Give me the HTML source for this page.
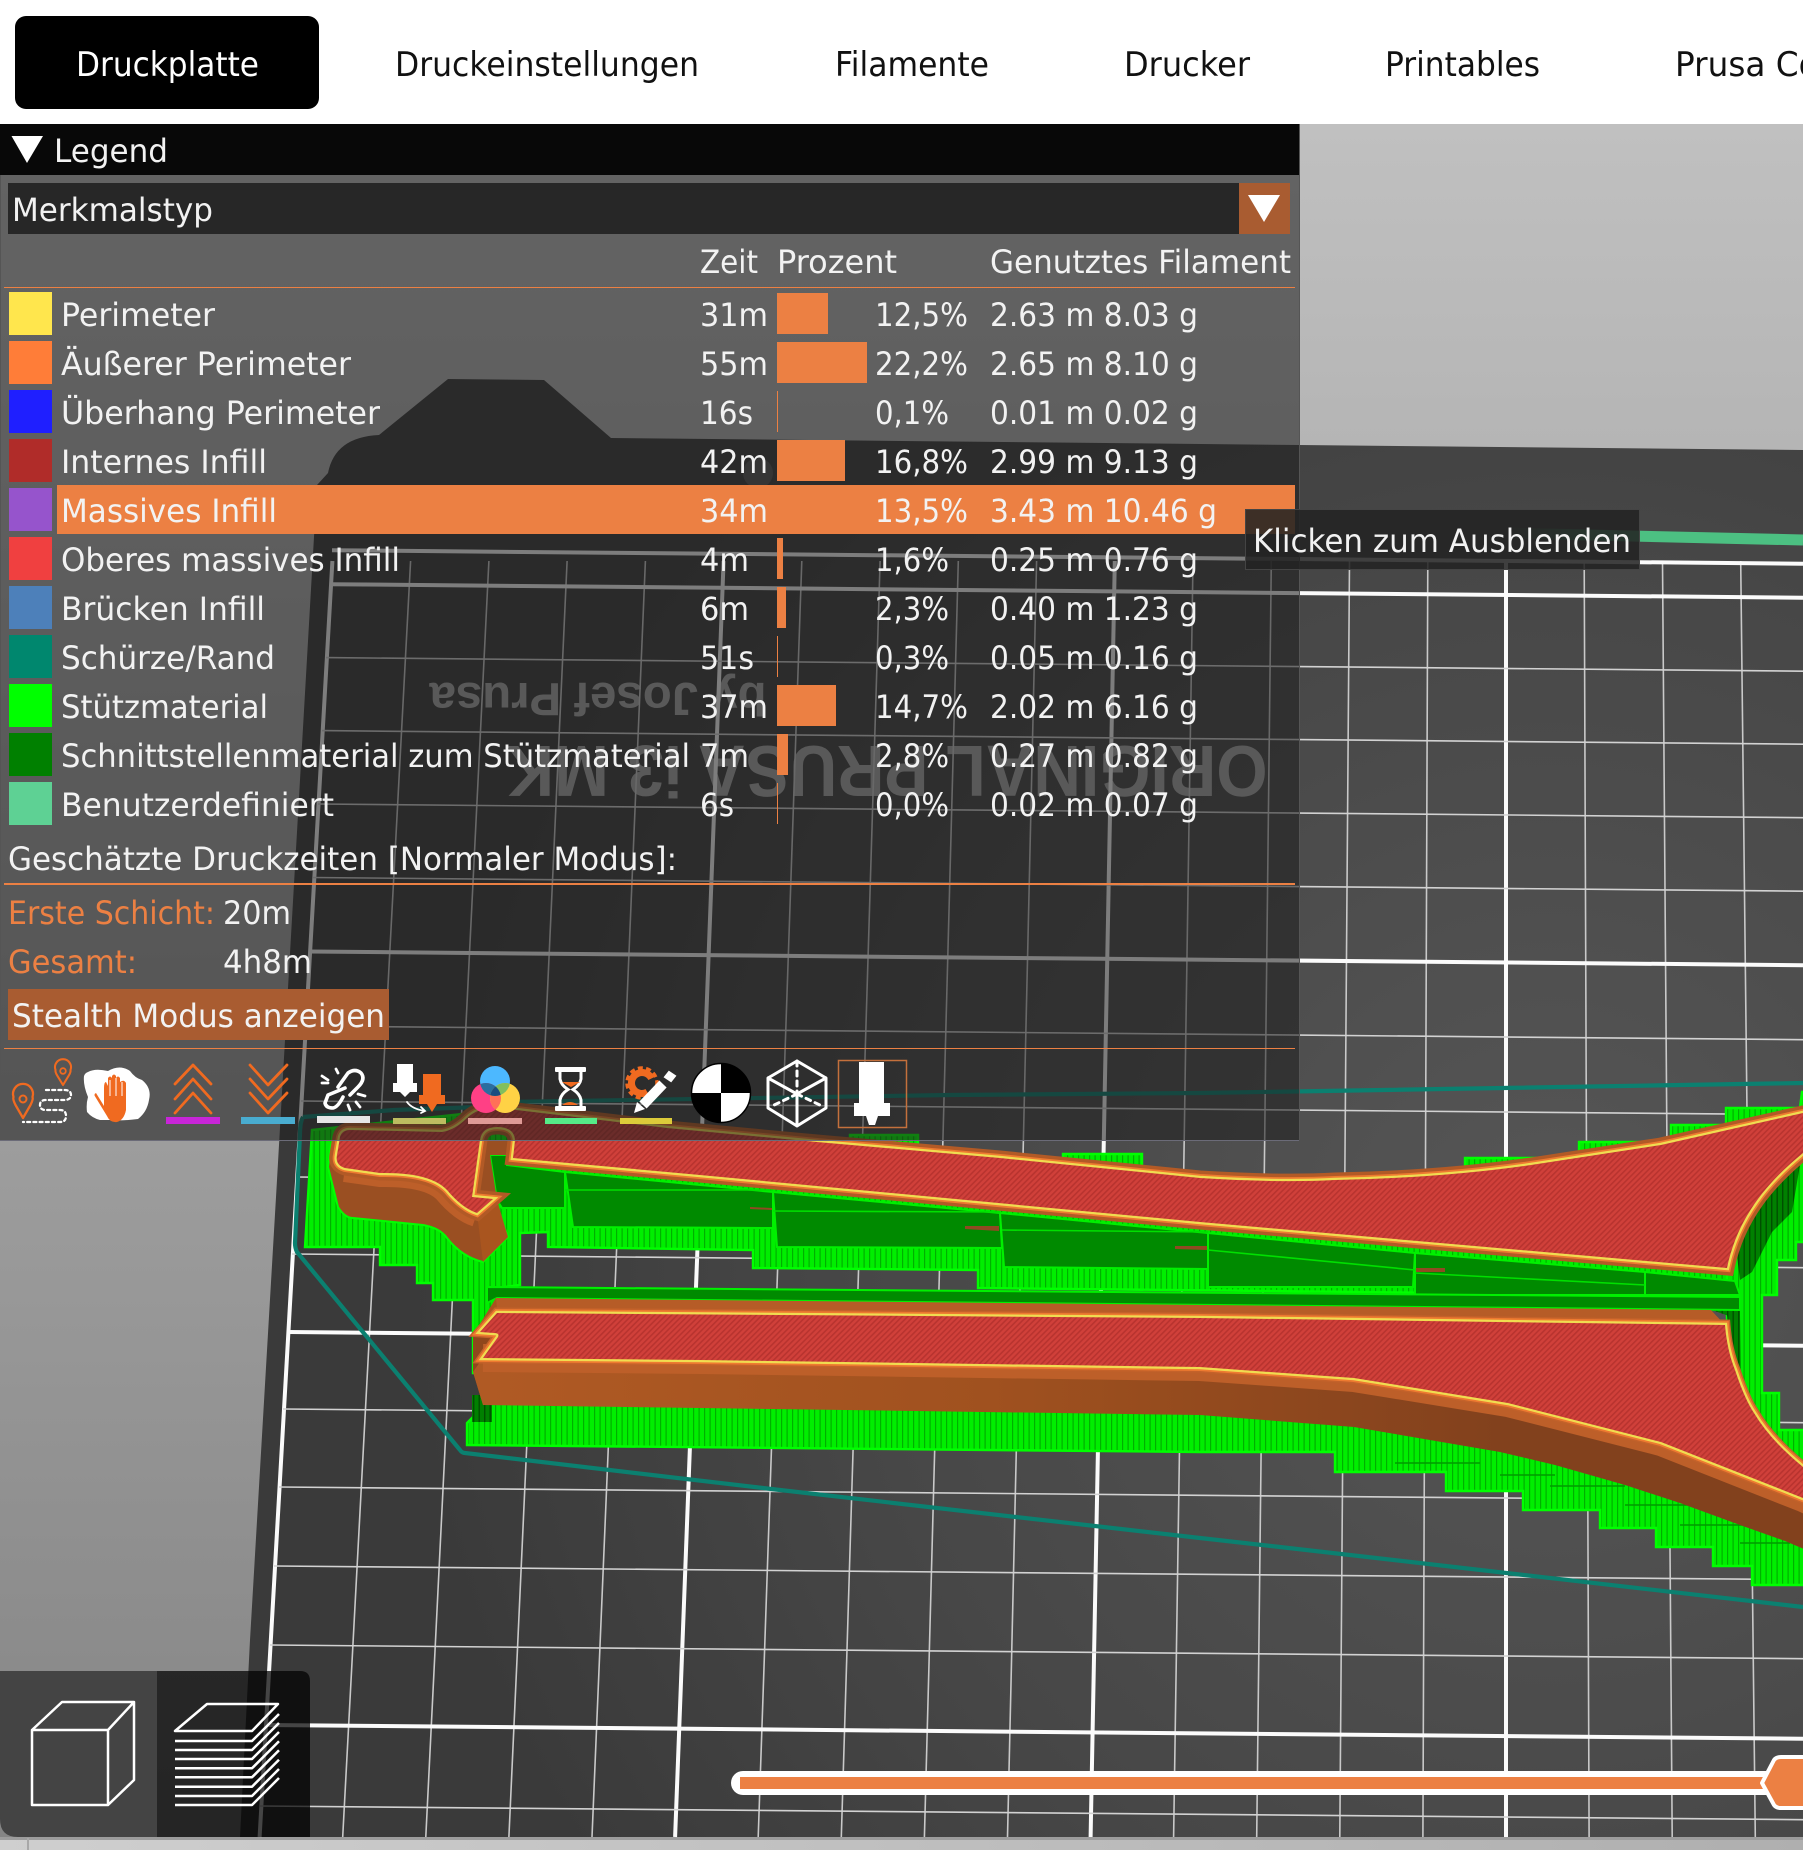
<!DOCTYPE html>
<html lang="de"><head><meta charset="utf-8"><title>Legend</title>
<style>
html,body{margin:0;padding:0;background:#fff}
svg{display:block}
text{font-family:"DejaVu Sans",sans-serif;font-size:32px;fill:#f2f2f2}
.o{fill:#ec8043}
.tab{font-size:34px;fill:#111}
</style></head><body>
<svg xmlns="http://www.w3.org/2000/svg" width="1803" height="1850" viewBox="0 0 1803 1850">
<defs>
<linearGradient id="bg" x1="0" y1="124" x2="0" y2="1840" gradientUnits="userSpaceOnUse"><stop offset="0" stop-color="#c0c0c0"/><stop offset="1" stop-color="#858585"/></linearGradient>
<linearGradient id="strip" x1="0" y1="0" x2="1803" y2="0" gradientUnits="userSpaceOnUse"><stop offset="0" stop-color="#cfcfcf"/><stop offset="1" stop-color="#afafaf"/></linearGradient>
<radialGradient id="plate" cx="1550" cy="1250" r="1150" gradientUnits="userSpaceOnUse"><stop offset="0" stop-color="#565656"/><stop offset=".6" stop-color="#474747"/><stop offset="1" stop-color="#3a3a3a"/></radialGradient>
<linearGradient id="purge" x1="1504" y1="0" x2="1600" y2="0" gradientUnits="userSpaceOnUse"><stop offset="0" stop-color="#4cc082" stop-opacity="0"/><stop offset="1" stop-color="#4cc082"/></linearGradient>
<linearGradient id="wall" x1="480" y1="0" x2="1500" y2="0" gradientUnits="userSpaceOnUse"><stop offset="0" stop-color="#b05a24"/><stop offset=".5" stop-color="#a0511f"/><stop offset="1" stop-color="#82411d"/></linearGradient>
<pattern id="red" width="4" height="4" patternUnits="userSpaceOnUse" patternTransform="rotate(45)"><rect width="4" height="4" fill="#d0403a"/><rect width="1.6" height="4" fill="#b8332f"/></pattern>
<pattern id="grn" width="5.5" height="10" patternUnits="userSpaceOnUse"><rect width="5.5" height="10" fill="#00ee00"/><rect width="1.2" height="10" fill="#00b000"/></pattern>
<pattern id="dgrn" width="5.5" height="10" patternUnits="userSpaceOnUse"><rect width="5.5" height="10" fill="#008000"/><rect width="1.4" height="10" fill="#004f00"/></pattern>
<path id="up" d="M350 1130L442 1132Q455 1130 467 1118Q480 1106 500 1108L667 1128L817 1142L1000 1158L1200 1178Q1280 1183 1335 1180Q1440 1178 1531 1165L1661 1145L1803 1113L1830 1107L1830 1135L1803 1153C1770 1180 1738 1215 1727 1268L1200 1222L700 1175L513 1158Q514 1150 515 1140Q514 1127 497 1127Q482 1127 480 1140L472 1197L493 1199L477 1213Q462 1208 447 1190Q430 1172 380 1173L345 1168Q335 1165 337 1155L340 1137Q342 1130 350 1130Z"/>
<path id="lo" d="M497 1313L1200 1318L1725 1325Q1727 1350 1735 1370Q1745 1400 1754 1413Q1770 1440 1803 1467L1830 1490L1830 1510L1803 1498L1661 1442L1508 1403L1354 1378L1200 1367L700 1360L483 1358L498 1337Q500 1333 494 1333L480 1332Z"/>
<clipPath id="cb"><circle cx="495" cy="1081" r="15"/></clipPath>
<clipPath id="cp"><circle cx="486" cy="1098" r="15"/></clipPath>
<clipPath id="cy"><circle cx="505" cy="1098" r="15"/></clipPath>
</defs>

<!-- background -->
<rect width="1803" height="1850" fill="#fff"/>
<rect y="124" width="1803" height="1716" fill="url(#bg)"/>
<rect y="1840" width="1803" height="10" fill="url(#strip)"/>
<rect y="1837" width="1803" height="3" fill="#9c9c9c"/>
<rect x="27" y="1838" width="2" height="12" fill="#a8a8a8"/>

<!-- plate -->
<path d="M240 1837L250 1640L277 1180L285 1040L317 485L328 473Q335 437 379 435L448 379L544 380L611 438L1299 445L1803 450L1803 1837Z" fill="url(#plate)"/>
<circle cx="758" cy="473" r="15" fill="#555"/>
<text transform="rotate(180 887 746)" x="887" y="746" text-anchor="middle" textLength="761" lengthAdjust="spacingAndGlyphs" style="font-family:'Liberation Sans',sans-serif;font-weight:bold;font-size:72px;fill:#a8a8a8">ORIGINAL PRUSA i3 MK</text>
<text transform="rotate(180 598 683)" x="598" y="683" text-anchor="middle" textLength="337" lengthAdjust="spacingAndGlyphs" style="font-family:'Liberation Sans',sans-serif;font-weight:bold;font-size:46px;fill:#a8a8a8">by Josef Prusa</text>

<!-- grid -->
<path fill="none" stroke="#c9c9c9" stroke-width="1.6" d="M410.6 561L342.7 1837M488.9 561L425.8 1837M567.1 561L508.9 1837M645.4 561L592 1837M801.8 561L758.2 1837M880.1 561L841.3 1837M958.3 561L924.4 1837M1036.6 561L1007.5 1837M1193 561L1173.6 1837M1271.3 561L1256.7 1837M1349.5 561L1339.8 1837M1427.8 561L1422.9 1837M1584.2 561L1589.1 1837M1662.5 561L1672.2 1837M1740.7 561L1755.3 1837"/>
<path fill="none" stroke="#fbfbfb" stroke-width="4" d="M332.4 561L259.6 1837M723.6 561L675.1 1837M1114.8 561L1090.6 1837M1506 561L1506 1837"/>
<path fill="none" stroke="#d2d2d2" stroke-width="1.6" d="M326 657.6L1803 671.2M322 730.6L1803 744.2M318 804L1803 817.7M313 877.5L1803 891.2M305 1026L1803 1039.7M301 1101L1803 1114.7M296 1177L1803 1190.7M292 1254L1803 1267.7M283 1409L1803 1422.7M279 1487L1803 1500.7M274 1566L1803 1579.7M270 1645L1803 1658.7M260 1806L1803 1819.7"/>
<path fill="none" stroke="#fbfbfb" stroke-width="4" d="M332 550.2L1803 563.7M330 584.2L1803 597.7M309 951.5L1803 965.2M288 1332L1803 1345.7M265 1725L1803 1738.7"/>

<!-- purge line -->
<path d="M1504 533L1803 540" stroke="url(#purge)" stroke-width="11" fill="none"/>

<!-- skirt -->
<path d="M303 1117L394 1110L479 1107L503 1102L950 1095L1200 1093L1803 1083M303 1117Q300 1122 300 1133L295 1243Q295 1248 297 1252L460 1450Q462 1453 465 1453L780 1490L1200 1538L1280 1547L1803 1607" fill="none" stroke="#0b8070" stroke-width="4.2"/>

<!-- green supports -->
<g stroke="#00ff00" stroke-width="2.4" fill="url(#grn)">
<polygon points="312,1130 305,1247 380,1247 380,1265 417,1265 417,1283 433,1283 433,1300 473,1300 473,1373 497,1373 497,1288 520,1285 520,1233 548,1232 548,1247 753,1250 753,1268 978,1270 978,1288 1740,1296 1740,1260 1400,1200 500,1110"/>
<polygon points="467,1423 467,1445 1200,1452 1335,1452 1335,1472 1446,1472 1446,1491 1523,1491 1523,1510 1600,1510 1600,1528 1656,1528 1656,1547 1713,1547 1713,1566 1752,1566 1752,1585 1810,1585 1810,1500 1200,1400 490,1400"/>
<polygon points="1727,1277 1735,1235 1760,1195 1810,1145 1810,1242 1796,1242 1796,1260 1777,1260 1777,1295 1762,1295 1762,1393 1779,1393 1779,1430 1810,1430 1810,1480 1760,1420 1735,1370 1727,1330"/>
<polygon points="1465,1175 1465,1158 1579,1158 1579,1142 1671,1142 1671,1125 1726,1125 1726,1108 1800,1108 1802,1092 1810,1092 1810,1120"/>
<polygon points="1063,1154 1142,1154 1142,1168 1063,1162"/>
<polygon points="850,1135 918,1135 918,1148 850,1144"/>
</g>
<path d="M1500 1475L1555 1475M1550 1486H1625M1625 1505H1695M1680 1525H1745M1740 1543H1790M1395 1463H1480" stroke="#009a00" stroke-width="1.6" fill="none"/>
<polygon points="472,1395 492,1395 492,1422 472,1422" fill="url(#dgrn)"/>
<polygon points="1735,1240 1760,1200 1800,1165 1792,1212 1772,1232 1752,1272 1740,1280" fill="url(#dgrn)"/>
<polygon points="1727,1315 1740,1315 1741,1390 1762,1425 1762,1440 1745,1410 1733,1375" fill="url(#dgrn)"/>
<polygon points="1700,1298 1740,1296 1740,1320 1712,1310" fill="url(#dgrn)"/>

<!-- dark interface -->
<g fill="#008a00" stroke="#00f000" stroke-width="2">
<polygon points="490,1155 507,1155 507,1165 565,1172 565,1208 502,1208 497,1200"/>
<polygon points="565,1172 773,1192 773,1228 573,1227"/>
<polygon points="773,1192 1000,1213 1002,1248 777,1247"/>
<polygon points="1000,1213 1208,1233 1208,1269 1004,1267"/>
<polygon points="1208,1233 1415,1253 1413,1287 1208,1287"/>
<polygon points="1415,1253 1645,1272 1645,1295 1415,1295"/>
<polygon points="1645,1272 1735,1281 1740,1295 1645,1295"/>
<polygon points="487,1287 1740,1297 1740,1310 497,1298 487,1303"/>
</g>
<path d="M565 1190H773M773 1211L1000 1212M1002 1230L1208 1232M1208 1250L1415 1270M1415 1273L1645 1285" stroke="#00e000" stroke-width="1.6" fill="none"/>
<path d="M750 1207L772 1208L772 1210L750 1209ZM965 1226L999 1226L999 1231L965 1229ZM1175 1246L1207 1246L1207 1250L1175 1249ZM1416 1268L1445 1268L1445 1272L1416 1272Z" fill="#8f4a22"/>

<!-- lower bar -->
<polygon points="496,1298 1711,1310 1725,1325 497,1314" fill="#b65c27"/>
<polygon points="496,1298 473,1335 473,1372 483,1405 500,1370 498,1320" fill="#a8541f"/>
<polygon points="473,1335 498,1337 483,1358 473,1372" fill="#8f471c"/>
<path d="M473 1372L483 1405L700 1408L1200 1415L1354 1427L1500 1452L1555 1465L1625 1485L1680 1503L1740 1525L1785 1541L1830 1560L1830 1500L1661 1442L1508 1403L1354 1378L1200 1367L700 1360L483 1358Z" fill="url(#wall)"/>
<path d="M483 1358L700 1360L1200 1367L1354 1378L1508 1403L1661 1442L1803 1498L1830 1510" fill="none" stroke="#bd5f29" stroke-width="28"/>
<use href="#lo" fill="none" stroke="#c4622a" stroke-width="11"/>
<use href="#lo" fill="none" stroke="#ee7a30" stroke-width="8"/>
<use href="#lo" fill="none" stroke="#f0dc50" stroke-width="4.500"/>
<use href="#lo" fill="url(#red)"/>

<!-- upper bar -->
<path d="M333 1130L328 1167L338 1207Q345 1218 353 1218L423 1225Q440 1228 447 1238Q462 1257 483 1262L508 1237L495 1200L477 1213L447 1190L380 1173L340 1160Z" fill="#9a4f22" stroke="#00ff00" stroke-width="2"/>
<polygon points="480,1140 515,1140 507,1165 507,1155 490,1155 497,1200 472,1197" fill="#9a4f22"/>
<path d="M345 1168L380 1173Q430 1172 447 1190Q462 1208 477 1213" fill="none" stroke="#bd5f29" stroke-width="28"/>
<path d="M477 1213L497 1200L508 1237L483 1262Z" fill="#a9551f"/>
<use href="#up" fill="none" stroke="#b25a26" stroke-width="15"/>
<use href="#up" fill="none" stroke="#ee7a30" stroke-width="8"/>
<use href="#up" fill="none" stroke="#f0dc50" stroke-width="4.500"/>
<use href="#up" fill="url(#red)"/>

<!-- tabs -->
<rect width="1803" height="124" fill="#fff"/>
<rect x="15" y="16" width="304" height="93" rx="11" fill="#000"/>
<text class="tab" x="76" y="76" textLength="183" lengthAdjust="spacingAndGlyphs" style="fill:#fff">Druckplatte</text>
<text class="tab" x="395" y="76" textLength="304" lengthAdjust="spacingAndGlyphs">Druckeinstellungen</text>
<text class="tab" x="835" y="76" textLength="154" lengthAdjust="spacingAndGlyphs">Filamente</text>
<text class="tab" x="1124" y="76" textLength="126" lengthAdjust="spacingAndGlyphs">Drucker</text>
<text class="tab" x="1385" y="76" textLength="155" lengthAdjust="spacingAndGlyphs">Printables</text>
<text class="tab" x="1675" y="76" textLength="236" lengthAdjust="spacingAndGlyphs">Prusa Connect</text>

<!-- legend panel -->
<rect x="0" y="124" width="1299" height="1016" fill="rgb(30,30,30)" fill-opacity=".57"/>
<path d="M.5 124V1140M1299.5 124V1140" stroke="#555" fill="none"/>
<path d="M0 1140.5H1299" stroke="#6b6b78" fill="none"/>
<rect x="0" y="124" width="1299" height="51" fill="#080808"/>
<polygon points="11.5,136 43,136 27,163" fill="#fff"/>
<text x="54" y="162" textLength="114" lengthAdjust="spacingAndGlyphs">Legend</text>
<rect x="8" y="183" width="1282" height="51" fill="#272727"/>
<rect x="1239" y="183" width="51" height="51" fill="#a95c31"/>
<polygon points="1248,195 1280,195 1264,222" fill="#fff"/>
<text x="12" y="221" textLength="201" lengthAdjust="spacingAndGlyphs">Merkmalstyp</text>
<text x="700" y="273" textLength="58" lengthAdjust="spacingAndGlyphs">Zeit</text>
<text x="777" y="273" textLength="120" lengthAdjust="spacingAndGlyphs">Prozent</text>
<text x="990" y="273" textLength="301" lengthAdjust="spacingAndGlyphs">Genutztes Filament</text>
<rect x="4" y="287" width="1291" height="1" fill="#ec8043"/>

<!-- swatches -->
<rect x="9" y="292" width="43" height="43" fill="#ffe64d"/>
<rect x="9" y="341" width="43" height="43" fill="#ff7d38"/>
<rect x="9" y="390" width="43" height="43" fill="#1f1fff"/>
<rect x="9" y="439" width="43" height="43" fill="#b02c29"/>
<rect x="9" y="488" width="43" height="43" fill="#9654cc"/>
<rect x="9" y="537" width="43" height="43" fill="#f04040"/>
<rect x="9" y="586" width="43" height="43" fill="#4d80ba"/>
<rect x="9" y="635" width="43" height="43" fill="#00876e"/>
<rect x="9" y="684" width="43" height="43" fill="#00ff00"/>
<rect x="9" y="733" width="43" height="43" fill="#008000"/>
<rect x="9" y="782" width="43" height="43" fill="#5ed194"/>

<!-- highlight + bars -->
<rect x="57" y="485" width="1238" height="49" fill="#ec8043"/>
<g fill="#ec8043">
<rect x="777" y="293" width="51" height="41"/>
<rect x="777" y="342" width="90" height="41"/>
<rect x="777" y="391" width="1" height="41"/>
<rect x="777" y="440" width="68" height="41"/>
<rect x="777" y="538" width="6" height="41"/>
<rect x="777" y="587" width="9" height="41"/>
<rect x="777" y="636" width="1" height="41"/>
<rect x="777" y="685" width="59" height="41"/>
<rect x="777" y="734" width="11" height="41"/>
<rect x="777" y="783" width="1" height="41"/>
</g>

<!-- rows -->
<text x="61" y="326" textLength="154" lengthAdjust="spacingAndGlyphs">Perimeter</text>
<text x="700" y="326" textLength="68" lengthAdjust="spacingAndGlyphs">31m</text>
<text x="875" y="326" textLength="93" lengthAdjust="spacingAndGlyphs">12,5%</text>
<text x="990" y="326" textLength="208" lengthAdjust="spacingAndGlyphs">2.63 m 8.03 g</text>

<text x="61" y="375" textLength="290" lengthAdjust="spacingAndGlyphs">Äußerer Perimeter</text>
<text x="700" y="375" textLength="68" lengthAdjust="spacingAndGlyphs">55m</text>
<text x="875" y="375" textLength="93" lengthAdjust="spacingAndGlyphs">22,2%</text>
<text x="990" y="375" textLength="208" lengthAdjust="spacingAndGlyphs">2.65 m 8.10 g</text>

<text x="61" y="424" textLength="319" lengthAdjust="spacingAndGlyphs">Überhang Perimeter</text>
<text x="700" y="424" textLength="53" lengthAdjust="spacingAndGlyphs">16s</text>
<text x="875" y="424" textLength="74" lengthAdjust="spacingAndGlyphs">0,1%</text>
<text x="990" y="424" textLength="208" lengthAdjust="spacingAndGlyphs">0.01 m 0.02 g</text>

<text x="61" y="473" textLength="206" lengthAdjust="spacingAndGlyphs">Internes Infill</text>
<text x="700" y="473" textLength="68" lengthAdjust="spacingAndGlyphs">42m</text>
<text x="875" y="473" textLength="93" lengthAdjust="spacingAndGlyphs">16,8%</text>
<text x="990" y="473" textLength="208" lengthAdjust="spacingAndGlyphs">2.99 m 9.13 g</text>

<text x="61" y="522" textLength="216" lengthAdjust="spacingAndGlyphs">Massives Infill</text>
<text x="700" y="522" textLength="68" lengthAdjust="spacingAndGlyphs">34m</text>
<text x="875" y="522" textLength="93" lengthAdjust="spacingAndGlyphs">13,5%</text>
<text x="990" y="522" textLength="227" lengthAdjust="spacingAndGlyphs">3.43 m 10.46 g</text>

<text x="61" y="571" textLength="339" lengthAdjust="spacingAndGlyphs">Oberes massives Infill</text>
<text x="700" y="571" textLength="49" lengthAdjust="spacingAndGlyphs">4m</text>
<text x="875" y="571" textLength="74" lengthAdjust="spacingAndGlyphs">1,6%</text>
<text x="990" y="571" textLength="208" lengthAdjust="spacingAndGlyphs">0.25 m 0.76 g</text>

<text x="61" y="620" textLength="204" lengthAdjust="spacingAndGlyphs">Brücken Infill</text>
<text x="700" y="620" textLength="49" lengthAdjust="spacingAndGlyphs">6m</text>
<text x="875" y="620" textLength="74" lengthAdjust="spacingAndGlyphs">2,3%</text>
<text x="990" y="620" textLength="208" lengthAdjust="spacingAndGlyphs">0.40 m 1.23 g</text>

<text x="61" y="669" textLength="214" lengthAdjust="spacingAndGlyphs">Schürze/Rand</text>
<text x="700" y="669" textLength="54" lengthAdjust="spacingAndGlyphs">51s</text>
<text x="875" y="669" textLength="74" lengthAdjust="spacingAndGlyphs">0,3%</text>
<text x="990" y="669" textLength="208" lengthAdjust="spacingAndGlyphs">0.05 m 0.16 g</text>

<text x="61" y="718" textLength="207" lengthAdjust="spacingAndGlyphs">Stützmaterial</text>
<text x="700" y="718" textLength="68" lengthAdjust="spacingAndGlyphs">37m</text>
<text x="875" y="718" textLength="93" lengthAdjust="spacingAndGlyphs">14,7%</text>
<text x="990" y="718" textLength="208" lengthAdjust="spacingAndGlyphs">2.02 m 6.16 g</text>

<text x="61" y="767" textLength="629" lengthAdjust="spacingAndGlyphs">Schnittstellenmaterial zum Stützmaterial</text>
<text x="700" y="767" textLength="49" lengthAdjust="spacingAndGlyphs">7m</text>
<text x="875" y="767" textLength="74" lengthAdjust="spacingAndGlyphs">2,8%</text>
<text x="990" y="767" textLength="208" lengthAdjust="spacingAndGlyphs">0.27 m 0.82 g</text>

<text x="61" y="816" textLength="273" lengthAdjust="spacingAndGlyphs">Benutzerdefiniert</text>
<text x="700" y="816" textLength="34" lengthAdjust="spacingAndGlyphs">6s</text>
<text x="875" y="816" textLength="74" lengthAdjust="spacingAndGlyphs">0,0%</text>
<text x="990" y="816" textLength="208" lengthAdjust="spacingAndGlyphs">0.02 m 0.07 g</text>

<text x="8" y="870" textLength="669" lengthAdjust="spacingAndGlyphs">Geschätzte Druckzeiten [Normaler Modus]:</text>
<rect x="4" y="883" width="1291" height="2" fill="#ec8043"/>
<text class="o" x="8" y="924" textLength="207" lengthAdjust="spacingAndGlyphs">Erste Schicht:</text>
<text x="223" y="924" textLength="68" lengthAdjust="spacingAndGlyphs">20m</text>
<text class="o" x="8" y="973" textLength="129" lengthAdjust="spacingAndGlyphs">Gesamt:</text>
<text x="223" y="973" textLength="89" lengthAdjust="spacingAndGlyphs">4h8m</text>
<rect x="8" y="989" width="381" height="51" fill="#a95c31"/>
<text x="12" y="1027" textLength="373" lengthAdjust="spacingAndGlyphs">Stealth Modus anzeigen</text>
<rect x="4" y="1048" width="1291" height="1" fill="#ec8043"/>

<!-- tooltip -->
<rect x="1245.5" y="509.5" width="394" height="60" fill="#232323" fill-opacity=".87" stroke="#444"/>
<text x="1253" y="552" textLength="378" lengthAdjust="spacingAndGlyphs">Klicken zum Ausblenden</text>

<!-- toolbar icons -->
<g fill="none" stroke-linecap="round" stroke-linejoin="round">
<path d="M23 1118L15.500 1105Q12.500 1099 13.500 1097A10 10 0 1 1 32.500 1097Q33.500 1099 30.500 1105Z" stroke="#f06a20" stroke-width="2.3"/>
<circle cx="23" cy="1099" r="3.500" stroke="#f06a20" stroke-width="2"/>
<path d="M63 1085L57.500 1076Q55 1072 55.500 1070A8 8 0 1 1 70.500 1070Q71 1072 68.500 1076Z" stroke="#f06a20" stroke-width="2.1"/>
<circle cx="63" cy="1071" r="2.800" stroke="#f06a20" stroke-width="1.800"/>
<path d="M46 1090L64 1090Q71 1090 71 1095Q71 1100 64 1100L46 1100Q40 1100 40 1105Q40 1110 46 1110L60 1110Q66 1110 66 1116Q66 1122 60 1122L23 1122" stroke="#fff" stroke-width="2.300" stroke-dasharray="3 3.200"/>
</g>
<path d="M88 1072Q95 1068 108 1071Q120 1064 130 1071Q135 1078 142 1080Q152 1088 149 1100Q147 1112 138 1119Q122 1121 112 1120L100 1120Q92 1118 87 1112Q86 1104 88 1097Q83 1085 84 1076Q85 1073 88 1072Z" fill="#fff"/>
<path d="M96 1093L104 1106L104 1088Q104 1082 106 1082L108 1086L108 1078Q110 1075 112 1078L112 1076Q114 1073 116 1076L116 1078Q118 1075 120 1078L120 1082Q124 1079 126 1083L126 1110Q124 1120 117 1122Q110 1123 107 1116L96 1098Q93 1094 96 1093Z" fill="#f06a20"/>
<path d="M110 1080V1096M116 1078V1096M122 1082V1096" stroke="#fff" stroke-width="1" fill="none"/>
<g fill="none" stroke="#f06a20" stroke-width="2.800" stroke-linecap="round" stroke-linejoin="round">
<path d="M175 1084L193 1065L211 1084M175 1099L193 1079L211 1099M175 1113L193 1093L211 1113"/>
<path d="M250 1065L268 1085L287 1065M250 1079L268 1099L287 1079M250 1093L268 1113L287 1093"/>
</g>
<rect x="166" y="1117" width="54" height="7" fill="#c825d8"/>
<rect x="241" y="1117" width="54" height="7" fill="#49acd0"/>
<g fill="none" stroke="#fff" stroke-linecap="round" stroke-linejoin="round">
<path stroke-width="3.600" d="M338 1087L348 1073Q355 1068 361 1073Q366 1079 358 1087L350 1095M345 1088L328 1095L325 1103Q326 1108 333 1108Q338 1107 343 1097"/>
<path stroke-width="2.800" d="M322 1076L328 1080M336 1069L338 1073M322 1083L328 1083M358 1094L365 1096M356 1102L360 1107M348 1105L350 1110"/>
</g>
<rect x="317" y="1116" width="53" height="7" fill="#e6e6e6"/>
<polygon points="397,1064 413,1064 413,1083 417,1083 417,1092 410,1092 405,1097 400,1092 393,1092 393,1083 397,1083" fill="#fff"/>
<polygon points="423,1074 441,1074 441,1095 445,1095 445,1104 437,1104 432,1112 427,1104 419,1104 419,1095 423,1095" fill="#f06a20"/>
<path d="M407 1102Q412 1109 425 1111M421 1107L425 1111L421 1113" stroke="#fff" stroke-width="1.800" fill="none" stroke-linecap="round"/>
<rect x="393" y="1118" width="53" height="6" fill="#bdbd60"/>
<circle cx="495" cy="1081" r="15" fill="#4cb8ff"/>
<circle cx="486" cy="1098" r="15" fill="#ff4085"/>
<circle cx="505" cy="1098" r="15" fill="#ffd245"/>
<g clip-path="url(#cp)"><circle cx="495" cy="1081" r="15" fill="#2a6ea0"/><circle cx="505" cy="1098" r="15" fill="#ff7058"/></g>
<g clip-path="url(#cy)"><circle cx="495" cy="1081" r="15" fill="#82bf5e"/></g>
<g clip-path="url(#cp)"><g clip-path="url(#cy)"><circle cx="495" cy="1081" r="15" fill="#1b4d80"/></g></g>
<rect x="468" y="1118" width="54" height="6" fill="#df9a96"/>
<g fill="none" stroke="#fff" stroke-width="3"><path d="M560 1072L560 1079Q561 1085 568 1089.500Q561 1094 560 1100L560 1106M581 1072L581 1079Q580 1085 573 1089.500Q580 1094 581 1100L581 1106"/></g>
<rect x="555" y="1067" width="31" height="5" fill="#fff" rx="1"/>
<rect x="555" y="1106" width="31" height="5" fill="#fff" rx="1"/>
<polygon points="562,1082 580,1082 571,1087" fill="#f06a20"/>
<path d="M562 1105Q570 1099 578 1105Z" fill="#f06a20"/>
<rect x="545" y="1118" width="52" height="6" fill="#55ea88"/>
<circle cx="642" cy="1083" r="10.500" fill="none" stroke="#f06a20" stroke-width="7" stroke-dasharray="50 16" transform="rotate(60 642 1083)"/>
<circle cx="642" cy="1083" r="15" fill="none" stroke="#f06a20" stroke-width="3.500" stroke-dasharray="5 3.300" />
<path d="M643 1105L663 1084" stroke="#fff" stroke-width="10" fill="none"/>
<path d="M665 1077L671 1081L675 1076L669 1072Z" fill="#fff" stroke="#fff" stroke-width="2"/>
<polygon points="634,1113 637,1102 645,1109" fill="#fff"/>
<rect x="620" y="1118" width="52" height="6" fill="#dccb3a"/>
<circle cx="721" cy="1093" r="29.500" fill="#fff" stroke="#000" stroke-width="1.500"/>
<path d="M721 1093V1063.500A29.500 29.500 0 0 1 750.500 1093ZM721 1093V1122.500A29.500 29.500 0 0 1 691.500 1093Z" fill="#000"/>
<g fill="none" stroke="#fff" stroke-width="3" stroke-linejoin="round" stroke-linecap="round">
<path d="M797 1061L826 1078L826 1108L797 1126L768 1108L768 1078ZM768 1078L797 1094L826 1078M797 1094V1126"/>
<path d="M797 1061V1094M797 1094L770 1107M797 1094L824 1107" stroke-dasharray="5 5"/>
</g>
<rect x="838.500" y="1060.500" width="68" height="67" fill="none" stroke="#c4703c" stroke-width="1.500"/>
<polygon points="859,1062 884,1062 884,1103 890,1103 890,1116 878,1116 875,1125 869,1125 866,1116 854,1116 854,1103 859,1103" fill="#fff"/>

<!-- slider -->
<path d="M743 1783H1770" stroke="#fff" stroke-width="24" stroke-linecap="round"/>
<rect x="740" y="1777" width="1030" height="12" fill="#ec8043"/>
<path d="M1762 1783L1774 1760Q1776 1757 1781 1757H1830V1808H1781Q1776 1808 1774 1805Z" fill="#ec8043" stroke="#fff" stroke-width="4" stroke-linejoin="round"/>

<!-- view toggle -->
<path d="M0 1671H157V1837H18Q0 1837 0 1819Z" fill="#444"/>
<path d="M157 1671H300Q310 1671 310 1681V1837H157Z" fill="#010101" fill-opacity=".73"/>
<path d="M32 1730H108V1805H32ZM32 1730L62 1702H134L108 1730M134 1702V1780L108 1805" fill="none" stroke="#fff" stroke-width="2.500" stroke-linejoin="round"/>
<path d="M175 1731L207 1704H278L252 1731ZM175 1741H252L279 1714M175 1750H252L279 1723M175 1759H252L279 1732M175 1768.300H252L279 1741.300M175 1777.300H252L279 1750.300M175 1786.700H252L279 1759.700M175 1796H252L279 1769M175 1805H252L279 1778" fill="none" stroke="#fff" stroke-width="2.500" stroke-linejoin="round"/>
</svg>
</body></html>
